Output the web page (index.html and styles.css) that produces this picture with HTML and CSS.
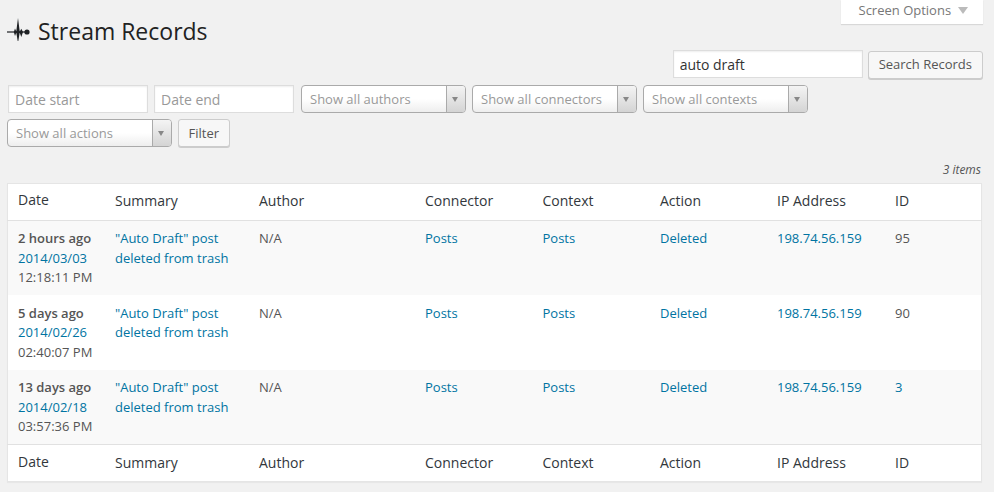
FILE: index.html
```html
<!DOCTYPE html>
<html lang="en">
<head>
  <meta charset="UTF-8" />
  <title>Stream Records</title>
  <link rel="stylesheet" href="styles.css">
</head>
<body>
  <div class="screen-meta">
    <button class="screen-tab">Screen Options <span class="tab-arrow"></span></button>
  </div>

  <div class="wrap">
    <h2 class="page-title">
      <svg class="stream-icon" width="24" height="24" viewBox="0 0 24 24">
        <path d="M0 11.400h20v1.200H0z" fill="#1e2124"/>
        <path d="M9.200 12L11-2l1.800 14-1.500 9h-.6zM6.800 12L8 8.500 9.500 12 8 16zM12.500 12l1.800-3.200L16 12l-1.700 5z" fill="#1e2124"/>
        <circle cx="20" cy="12" r="2.600" fill="#1e2124"/>
      </svg>
      Stream Records
    </h2>

    <div class="search-row">
      <input class="field search-input" type="text" value="auto draft">
      <button class="btn">Search Records</button>
    </div>

    <div class="filters">
      <input class="field date-input" type="text" placeholder="Date start">
      <input class="field date-input" type="text" placeholder="Date end">
      <div class="select"><span>Show all authors</span><b></b></div>
      <div class="select"><span>Show all connectors</span><b></b></div>
      <div class="select"><span>Show all contexts</span><b></b></div>
      <div class="select"><span>Show all actions</span><b></b></div>
      <button class="btn">Filter</button>
    </div>

    <div class="item-count">3 items</div>

    <table class="records">
      <thead>
        <tr>
          <th class="col-date sorted">Date</th>
          <th class="col-summary">Summary</th>
          <th class="col-author">Author</th>
          <th class="col-connector">Connector</th>
          <th class="col-context">Context</th>
          <th class="col-action">Action</th>
          <th class="col-ip">IP Address</th>
          <th>ID</th>
        </tr>
      </thead>
      <tbody>
        <tr class="alt">
          <td><strong>2 hours ago</strong><br><a href="#">2014/03/03</a><br>12:18:11 PM</td>
          <td><a href="#">"Auto Draft" post deleted from trash</a></td>
          <td>N/A</td>
          <td><a href="#">Posts</a></td>
          <td><a href="#">Posts</a></td>
          <td><a href="#">Deleted</a></td>
          <td><a href="#">198.74.56.159</a></td>
          <td>95</td>
        </tr>
        <tr>
          <td><strong>5 days ago</strong><br><a href="#">2014/02/26</a><br>02:40:07 PM</td>
          <td><a href="#">"Auto Draft" post deleted from trash</a></td>
          <td>N/A</td>
          <td><a href="#">Posts</a></td>
          <td><a href="#">Posts</a></td>
          <td><a href="#">Deleted</a></td>
          <td><a href="#">198.74.56.159</a></td>
          <td>90</td>
        </tr>
        <tr class="alt">
          <td><strong>13 days ago</strong><br><a href="#">2014/02/18</a><br>03:57:36 PM</td>
          <td><a href="#">"Auto Draft" post deleted from trash</a></td>
          <td>N/A</td>
          <td><a href="#">Posts</a></td>
          <td><a href="#">Posts</a></td>
          <td><a href="#">Deleted</a></td>
          <td><a href="#">198.74.56.159</a></td>
          <td><a href="#">3</a></td>
        </tr>
      </tbody>
      <tfoot>
        <tr>
          <th class="sorted">Date</th>
          <th>Summary</th>
          <th>Author</th>
          <th>Connector</th>
          <th>Context</th>
          <th>Action</th>
          <th>IP Address</th>
          <th>ID</th>
        </tr>
      </tfoot>
    </table>
  </div>
</body>
</html>
```

FILE: styles.css
```css
html, body {
  height: 492px;
  overflow: hidden;
}

body {
  margin: 0;
  background: #f1f1f1;
  font-family: "Open Sans", sans-serif;
  font-size: 13px;
  line-height: 19.5px;
  color: #444;
}

.screen-meta {
  display: flex;
  justify-content: flex-end;
  height: 25px;
  padding-right: 11px;
}

.screen-tab {
  box-sizing: border-box;
  width: 142px;
  height: 24px;
  padding: 0 0 5px 3px;
  background: #fff;
  border: none;
  box-shadow: 0 1px 1px rgba(0,0,0,0.1);
  font-family: inherit;
  font-size: 13px;
  color: #777;
}

.tab-arrow {
  display: inline-block;
  margin-left: 4px;
  margin-bottom: 1px;
  border-left: 5px solid transparent;
  border-right: 5px solid transparent;
  border-top: 7px solid #bbb;
}

.wrap {
  padding: 0 11px 0 7px;
}

.page-title {
  display: flex;
  align-items: center;
  gap: 7px;
  height: 20px;
  margin: -6px 0 0;
  padding: 3px 0 0;
  font-size: 23px;
  font-weight: 400;
  color: #222;
}

.stream-icon {
  flex: none;
  overflow: visible;
}

.search-row {
  display: flex;
  justify-content: flex-end;
  gap: 5px;
  align-items: flex-start;
  height: 35px;
  margin-top: 8px;
}

.search-row .btn {
  padding-bottom: 2px;
}

.field {
  box-sizing: border-box;
  height: 28px;
  padding: 0 6px;
  background: #fff;
  border: 1px solid #ddd;
  box-shadow: inset 0 1px 2px rgba(0,0,0,0.07);
  font-family: inherit;
  font-size: 14px;
  color: #333;
  outline: none;
}

.field::placeholder {
  color: #999;
  opacity: 1;
}

.search-input {
  width: 190px;
}

.btn {
  box-sizing: border-box;
  height: 28px;
  margin-top: 1px;
  padding: 0 10px;
  background: #f7f7f7;
  border: 1px solid #ccc;
  border-radius: 3px;
  box-shadow: 0 1px 0 #ccc;
  font-family: inherit;
  font-size: 13px;
  color: #555;
}

.filters {
  display: flex;
  flex-wrap: wrap;
  align-items: flex-start;
  gap: 6px;
  width: 820px;
}

.date-input {
  width: 140px;
  margin-left: 1px;
}

.date-input + .date-input {
  margin-left: 0;
  margin-right: 1px;
}

.select {
  box-sizing: border-box;
  display: flex;
  align-items: center;
  justify-content: space-between;
  width: 165px;
  height: 28px;
  background: linear-gradient(to bottom, #fff 50%, #eee);
  border: 1px solid #aaa;
  border-radius: 4px;
  font-size: 13px;
  color: #999;
  overflow: hidden;
}

.select span {
  padding-left: 8px;
  padding-top: 1px;
  white-space: nowrap;
}

.select b {
  flex: none;
  position: relative;
  width: 18px;
  height: 100%;
  background: linear-gradient(to bottom, #f4f4f4, #d4d4d4);
  border-left: 1px solid #aaa;
}

.select b::after {
  content: "";
  position: absolute;
  top: 11px;
  left: 5px;
  border-left: 3.500px solid transparent;
  border-right: 3.500px solid transparent;
  border-top: 5px solid #888;
}

.filters .btn {
  margin-top: 0;
  padding: 0 9.500px;
}

.item-count {
  height: 20px;
  margin-top: 13px;
  padding-right: 2px;
  text-align: right;
  font-size: 12px;
  font-style: italic;
  color: #555;
}

.records {
  box-sizing: border-box;
  width: 975px;
  margin-top: 3px;
  border-collapse: collapse;
  table-layout: fixed;
  background: #fff;
  border: 1px solid #e5e5e5;
  box-shadow: 0 1px 1px rgba(0,0,0,0.04);
}

.records th {
  box-sizing: border-box;
  padding: 0 10px 2px;
  text-align: left;
  font-size: 14px;
  font-weight: 400;
  color: #32373c;
}

.records thead th {
  height: 36.750px;
  border-bottom: 1px solid #e1e1e1;
}

.records tfoot th {
  height: 37px;
  padding-bottom: 1px;
  border-top: 1px solid #e1e1e1;
}

.records th.sorted {
  padding-bottom: 4px;
}

.records tfoot th.sorted {
  padding-bottom: 3px;
}

.records td {
  padding: 8.250px 10px 7.750px;
  vertical-align: top;
  color: #555;
}

.records tr.alt td {
  background: #f9f9f9;
}

.records a {
  color: #0074a2;
  text-decoration: none;
}

.records strong {
  font-weight: 600;
}

.col-date { width: 97.500px; }
.col-summary { width: 144px; }
.col-author { width: 166px; }
.col-connector { width: 117.500px; }
.col-context { width: 117.500px; }
.col-action { width: 117px; }
.col-ip { width: 118px; }
```
